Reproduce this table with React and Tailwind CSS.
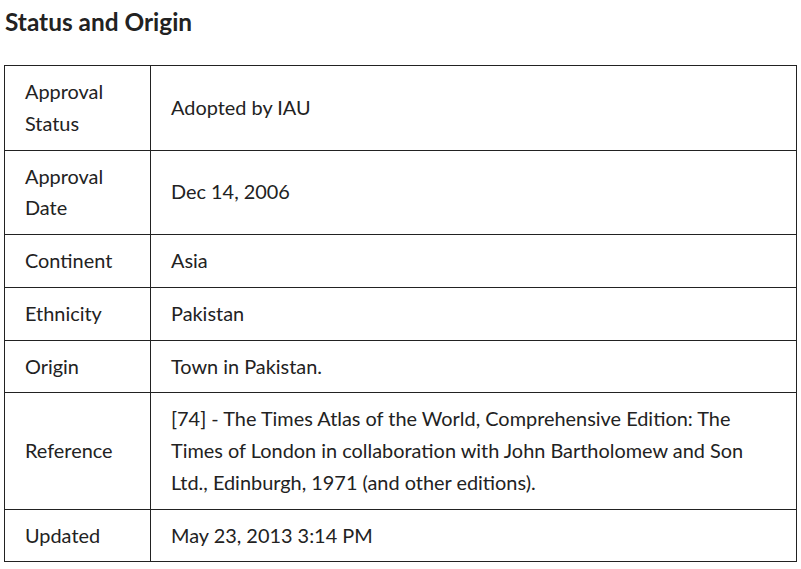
import React from 'react';

const rows = [
  { label: 'Approval Status', value: 'Adopted by IAU' },
  { label: 'Approval Date', value: 'Dec 14, 2006' },
  { label: 'Continent', value: 'Asia' },
  { label: 'Ethnicity', value: 'Pakistan' },
  { label: 'Origin', value: 'Town in Pakistan.' },
  {
    label: 'Reference',
    value:
      '[74] - The Times Atlas of the World, Comprehensive Edition: The Times of London in collaboration with John Bartholomew and Son Ltd., Edinburgh, 1971 (and other editions).',
  },
  { label: 'Updated', value: 'May 23, 2013 3:14 PM' },
];

export default function App() {
  return (
    <div className="bg-white w-[801px] h-[569px] text-[#222] font-['Lato','Liberation_Sans',sans-serif]">
      <h2 className="pl-[5px] pt-[7px] text-[24.4px] leading-[30px] font-bold">Status and Origin</h2>
      <table className="ml-[4px] mt-[28px] w-[793px] border-collapse text-[19.9px] leading-[31.75px]">
        <tbody>
          {rows.map((row) => (
            <tr key={row.label}>
              <td className="w-[146px] border border-[#222] px-[20px] py-[10px] align-middle">{row.label}</td>
              <td className="border border-[#222] px-[20px] py-[10px] align-middle">{row.value}</td>
            </tr>
          ))}
        </tbody>
      </table>
    </div>
  );
}
